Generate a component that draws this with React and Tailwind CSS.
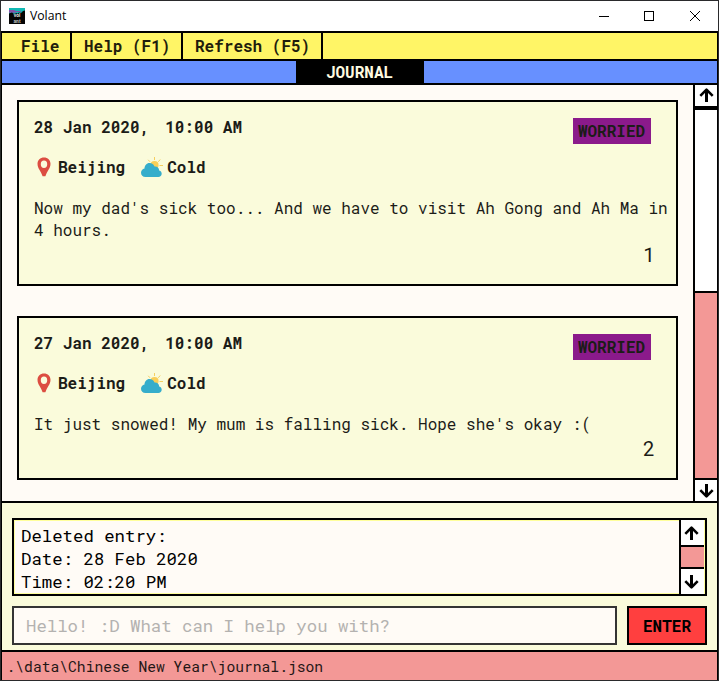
import React from "react";

function Arrow({ down = false }) {
  return (
    <svg width="15" height="16" viewBox="0 0 15 16" fill="none" stroke="#000" className={down ? "rotate-180" : ""}>
      <path d="M7.500 15V3" strokeWidth="3" />
      <path d="M1.300 8.900L7.500 2.700L13.700 8.900" strokeWidth="2.600" strokeLinejoin="round" />
    </svg>
  );
}

function Pin() {
  return (
    <svg width="14" height="20" viewBox="0 0 14 20">
      <path fillRule="evenodd" fill="#dc4d41" d="M7 .5C3.200 .5 .5 3.200 .5 6.800C.5 11.500 4 14 5.600 19.300H8.400C10 14 13.500 11.500 13.500 6.800C13.500 3.200 10.800 .5 7 .5ZM7 3.500A3.200 3.700 0 1 1 7 10.900A3.200 3.700 0 1 1 7 3.500Z" />
    </svg>
  );
}

function Weather() {
  return (
    <svg width="24" height="22" viewBox="0 0 24 22">
      <g stroke="#f6cf60" strokeWidth="1">
        <path d="M14.500 1V4M8.200 3.800L10 5.800M20.200 3.500L18.300 5.800M19.500 9.500H23" />
      </g>
      <circle cx="14.500" cy="9" r="4.100" fill="#f9cf58" />
      <path fill="#35adcb" d="M5.500 21C2.800 21 1 19.300 1 16.700C1 14.500 2.500 12.900 4.500 12.500C4.500 9.500 6.600 7 9.500 7C12 7 13.700 8.300 14.500 10.600C17 10.200 19 12 19.200 14.400C21 14.800 21.700 16.200 21.700 17.700C21.700 19.600 20.300 21 18.300 21Z" />
    </svg>
  );
}

function Logo() {
  return (
    <span className="relative flex h-4 w-4 flex-col items-center justify-end bg-[#050505] font-['Roboto',sans-serif] text-[5px] font-bold leading-[6px] text-[#e4e4e4]">
      <svg width="16" height="8" viewBox="0 0 16 8" className="absolute left-0 top-0">
        <path d="M0 0H16V2.500L14 3L12 5L10 4.500L8 6H0Z" fill="#10b9b4" />
        <path d="M0 2H5L7 3H12V4H8L6 4.800H0Z" fill="#8351a8" />
        <path d="M0 5.500L3 4.500L5 6L8 5V8H0Z" fill="#050505" />
      </svg>
      <span className="relative">vol</span>
      <span className="relative text-[#bbb]">ant</span>
    </span>
  );
}

function Entry({ date, text, index, className }) {
  return (
    <article className={`flex shrink-0 flex-col border-2 border-black bg-[#fafbdb] pl-[15px] text-[#1c1c18] ${className}`}>
      <div className="flex h-[42px] items-end justify-between pr-[25px] font-bold">
        <div className="flex h-7 gap-4 leading-[22px]">
          <span>{date}</span>
          <span>10:00 AM</span>
        </div>
        <span className="flex h-[26px] w-[78px] items-center justify-center bg-[#8b1a8b] pr-px">WORRIED</span>
      </div>
      <div className="mt-3 flex h-[22px] items-center font-bold leading-[22px]">
        <span className="ml-[3px] mr-[7px]"><Pin /></span>
        <span>Beijing</span>
        <span className="ml-[15px] mr-[3px]"><Weather /></span>
        <span>Cold</span>
      </div>
      <p className="mt-[19px] whitespace-pre leading-[22px]">{text}</p>
      <div className="mb-[18px] mt-auto pr-[21px] text-right text-[20px] leading-[24px]">{index}</div>
    </article>
  );
}

export default function App() {
  return (
    <div className="flex h-[681px] w-[719px] flex-col overflow-hidden border border-[#2a2a2c] bg-white font-['Roboto_Mono','DejaVu_Sans_Mono',monospace] text-[16px]">
      <header className="flex h-[30px] shrink-0 items-center pl-2">
        <Logo />
        <span className="ml-[5px] flex-1 pt-px font-['Open_Sans',sans-serif] text-[12.2px] text-black">Volant</span>
        <svg width="108" height="14" viewBox="0 0 108 14" className="mr-[14px]" fill="none" stroke="#000" shapeRendering="crispEdges">
          <path d="M3 7.500H13M48.500 2.500H57.500V11.500H48.500Z" />
          <path d="M94 2L104 12M104 2L94 12" shapeRendering="auto" />
        </svg>
      </header>
      <div className="flex min-h-0 flex-1 flex-col border-x border-t-2 border-black">
        <nav className="flex h-7 shrink-0 border-b-2 border-black bg-[#fff566] font-bold leading-[26px] text-[#1f1e0c]">
          <span className="w-[70px] border-r-2 border-black pl-[19px]">File</span>
          <span className="w-[111px] border-r-2 border-black pl-3">Help (F1)</span>
          <span className="w-[140px] border-r-2 border-black pl-3">Refresh (F5)</span>
        </nav>
        <div className="flex h-6 shrink-0 border-b-2 border-black bg-[#6790ff]">
          <h1 className="ml-[294px] w-32 bg-black pr-px text-center font-bold leading-[22px] text-[#fffbe0]">JOURNAL</h1>
        </div>
        <main className="flex h-[418px] shrink-0 border-b-2 border-black bg-[#fffbf6]">
          <section className="flex flex-1 flex-col gap-[30px] pl-[15px] pr-[15px] pt-[15px]">
            <Entry className="h-[186px]" date="28 Jan 2020," index="1" text={"Now my dad's sick too... And we have to visit Ah Gong and Ah Ma in\n4 hours."} />
            <Entry className="h-[164px]" date="27 Jan 2020," index="2" text="It just snowed! My mum is falling sick. Hope she's okay :(" />
          </section>
          <aside className="flex w-6 flex-col border-l-2 border-black bg-white">
            <div className="flex h-[25px] items-start border-b-4 border-black pl-1 pt-0.5"><Arrow /></div>
            <div className="flex-1" />
            <div className="h-[189px] border-y-2 border-black bg-[#f39896]" />
            <div className="flex h-[21px] items-center pl-1"><Arrow down /></div>
          </aside>
        </main>
        <section className="flex h-[149px] shrink-0 flex-col gap-[10px] border-b-2 border-black bg-[#fafbdb] px-[10px] pt-[15px]">
          <div className="flex h-[78px] border-2 border-black bg-[#ffff9c]">
            <div className="my-px ml-px flex-1 bg-[#fffbf6] pl-[6px] pt-[3px] text-[17.33px] leading-[23px] text-black">
              <p>Deleted entry:</p>
              <p>Date: 28 Feb 2020</p>
              <p>Time: 02:20 PM</p>
            </div>
            <div className="mr-px flex w-[25px] flex-col border-l-2 border-black bg-white">
              <div className="flex h-[25px] items-center pl-[3px]"><Arrow /></div>
              <div className="h-6 border-y-2 border-black bg-[#f39896]" />
              <div className="flex flex-1 items-center pl-[3px]"><Arrow down /></div>
            </div>
          </div>
          <div className="flex h-[39px] gap-[10px]">
            <div className="flex-1 border-2 border-[#343434] bg-[#fffbf6] pl-3 text-[17.33px] leading-[36px] text-[#b4b2b0]">Hello! :D What can I help you with?</div>
            <button className="w-20 border-2 border-black bg-[#ff3f3f] font-bold text-black">ENTER</button>
          </div>
        </section>
        <footer className="flex-1 bg-[#f39896] pl-[4.5px] text-[14.67px] leading-[29px] text-[#241615]">{".\\data\\Chinese New Year\\journal.json"}</footer>
      </div>
    </div>
  );
}
